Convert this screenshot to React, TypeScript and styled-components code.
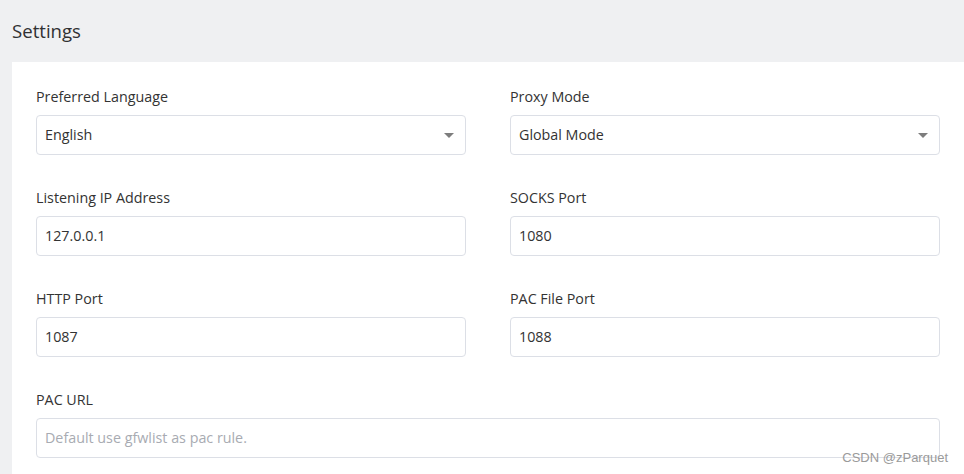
import React from "react";
import styled, { createGlobalStyle } from "styled-components";

const Global = createGlobalStyle`
  html, body { margin: 0; padding: 0; background: #eff0f2; }
  body { font-family: "Open Sans", "Noto Sans", sans-serif; color: #333; }
  * { box-sizing: border-box; }
`;

const Page = styled.div`
  width: 964px;
  height: 474px;
  background: #eff0f2;
  display: flex;
  flex-direction: column;
  overflow: hidden;
  position: relative;
`;

const Header = styled.h1`
  margin: 0;
  height: 62px;
  padding: 18px 0 0 12px;
  font-size: 18.6px;
  font-weight: 400;
  line-height: 25px;
  color: #303133;
`;

const Card = styled.div`
  flex: 1;
  margin-left: 12px;
  background: #fff;
  padding: 25px 24px 0 24px;
  display: grid;
  grid-template-columns: 430px 430px;
  column-gap: 44px;
  row-gap: 33px;
  align-content: start;
`;

const Field = styled.div<{ $full?: boolean }>`
  display: flex;
  flex-direction: column;
  gap: 8px;
  grid-column: ${(p) => (p.$full ? "1 / -1" : "auto")};
`;

const Label = styled.label`
  font-size: 14.3px;
  line-height: 20px;
  color: #333;
`;

const InputBox = styled.div`
  position: relative;
  height: 40px;
  border: 1px solid #dcdfe6;
  border-radius: 4px;
  background: #fff;
  display: flex;
  align-items: center;
  padding: 0 8px 2px 8px;
  font-size: 14.3px;
  color: #333;
`;

const Placeholder = styled.span`
  color: #a8abb2;
`;

const Caret = styled.span`
  position: absolute;
  right: 11px;
  top: 17px;
  width: 0;
  height: 0;
  border-left: 5px solid transparent;
  border-right: 5px solid transparent;
  border-top: 5px solid #7d7d7d;
`;

const Watermark = styled.div`
  position: absolute;
  right: 16px;
  bottom: 9px;
  font-family: "Liberation Sans", Arial, sans-serif;
  font-size: 13px;
  color: #9a9a9a;
`;

const Select = ({ value }: { value: string }) => (
  <InputBox>
    {value}
    <Caret />
  </InputBox>
);

export default function App() {
  return (
    <Page>
      <Global />
      <Header>Settings</Header>
      <Card>
        <Field>
          <Label>Preferred Language</Label>
          <Select value="English" />
        </Field>
        <Field>
          <Label>Proxy Mode</Label>
          <Select value="Global Mode" />
        </Field>
        <Field>
          <Label>Listening IP Address</Label>
          <InputBox>127.0.0.1</InputBox>
        </Field>
        <Field>
          <Label>SOCKS Port</Label>
          <InputBox>1080</InputBox>
        </Field>
        <Field>
          <Label>HTTP Port</Label>
          <InputBox>1087</InputBox>
        </Field>
        <Field>
          <Label>PAC File Port</Label>
          <InputBox>1088</InputBox>
        </Field>
        <Field $full>
          <Label>PAC URL</Label>
          <InputBox>
            <Placeholder>Default use gfwlist as pac rule.</Placeholder>
          </InputBox>
        </Field>
      </Card>
      <Watermark>CSDN @zParquet</Watermark>
    </Page>
  );
}
